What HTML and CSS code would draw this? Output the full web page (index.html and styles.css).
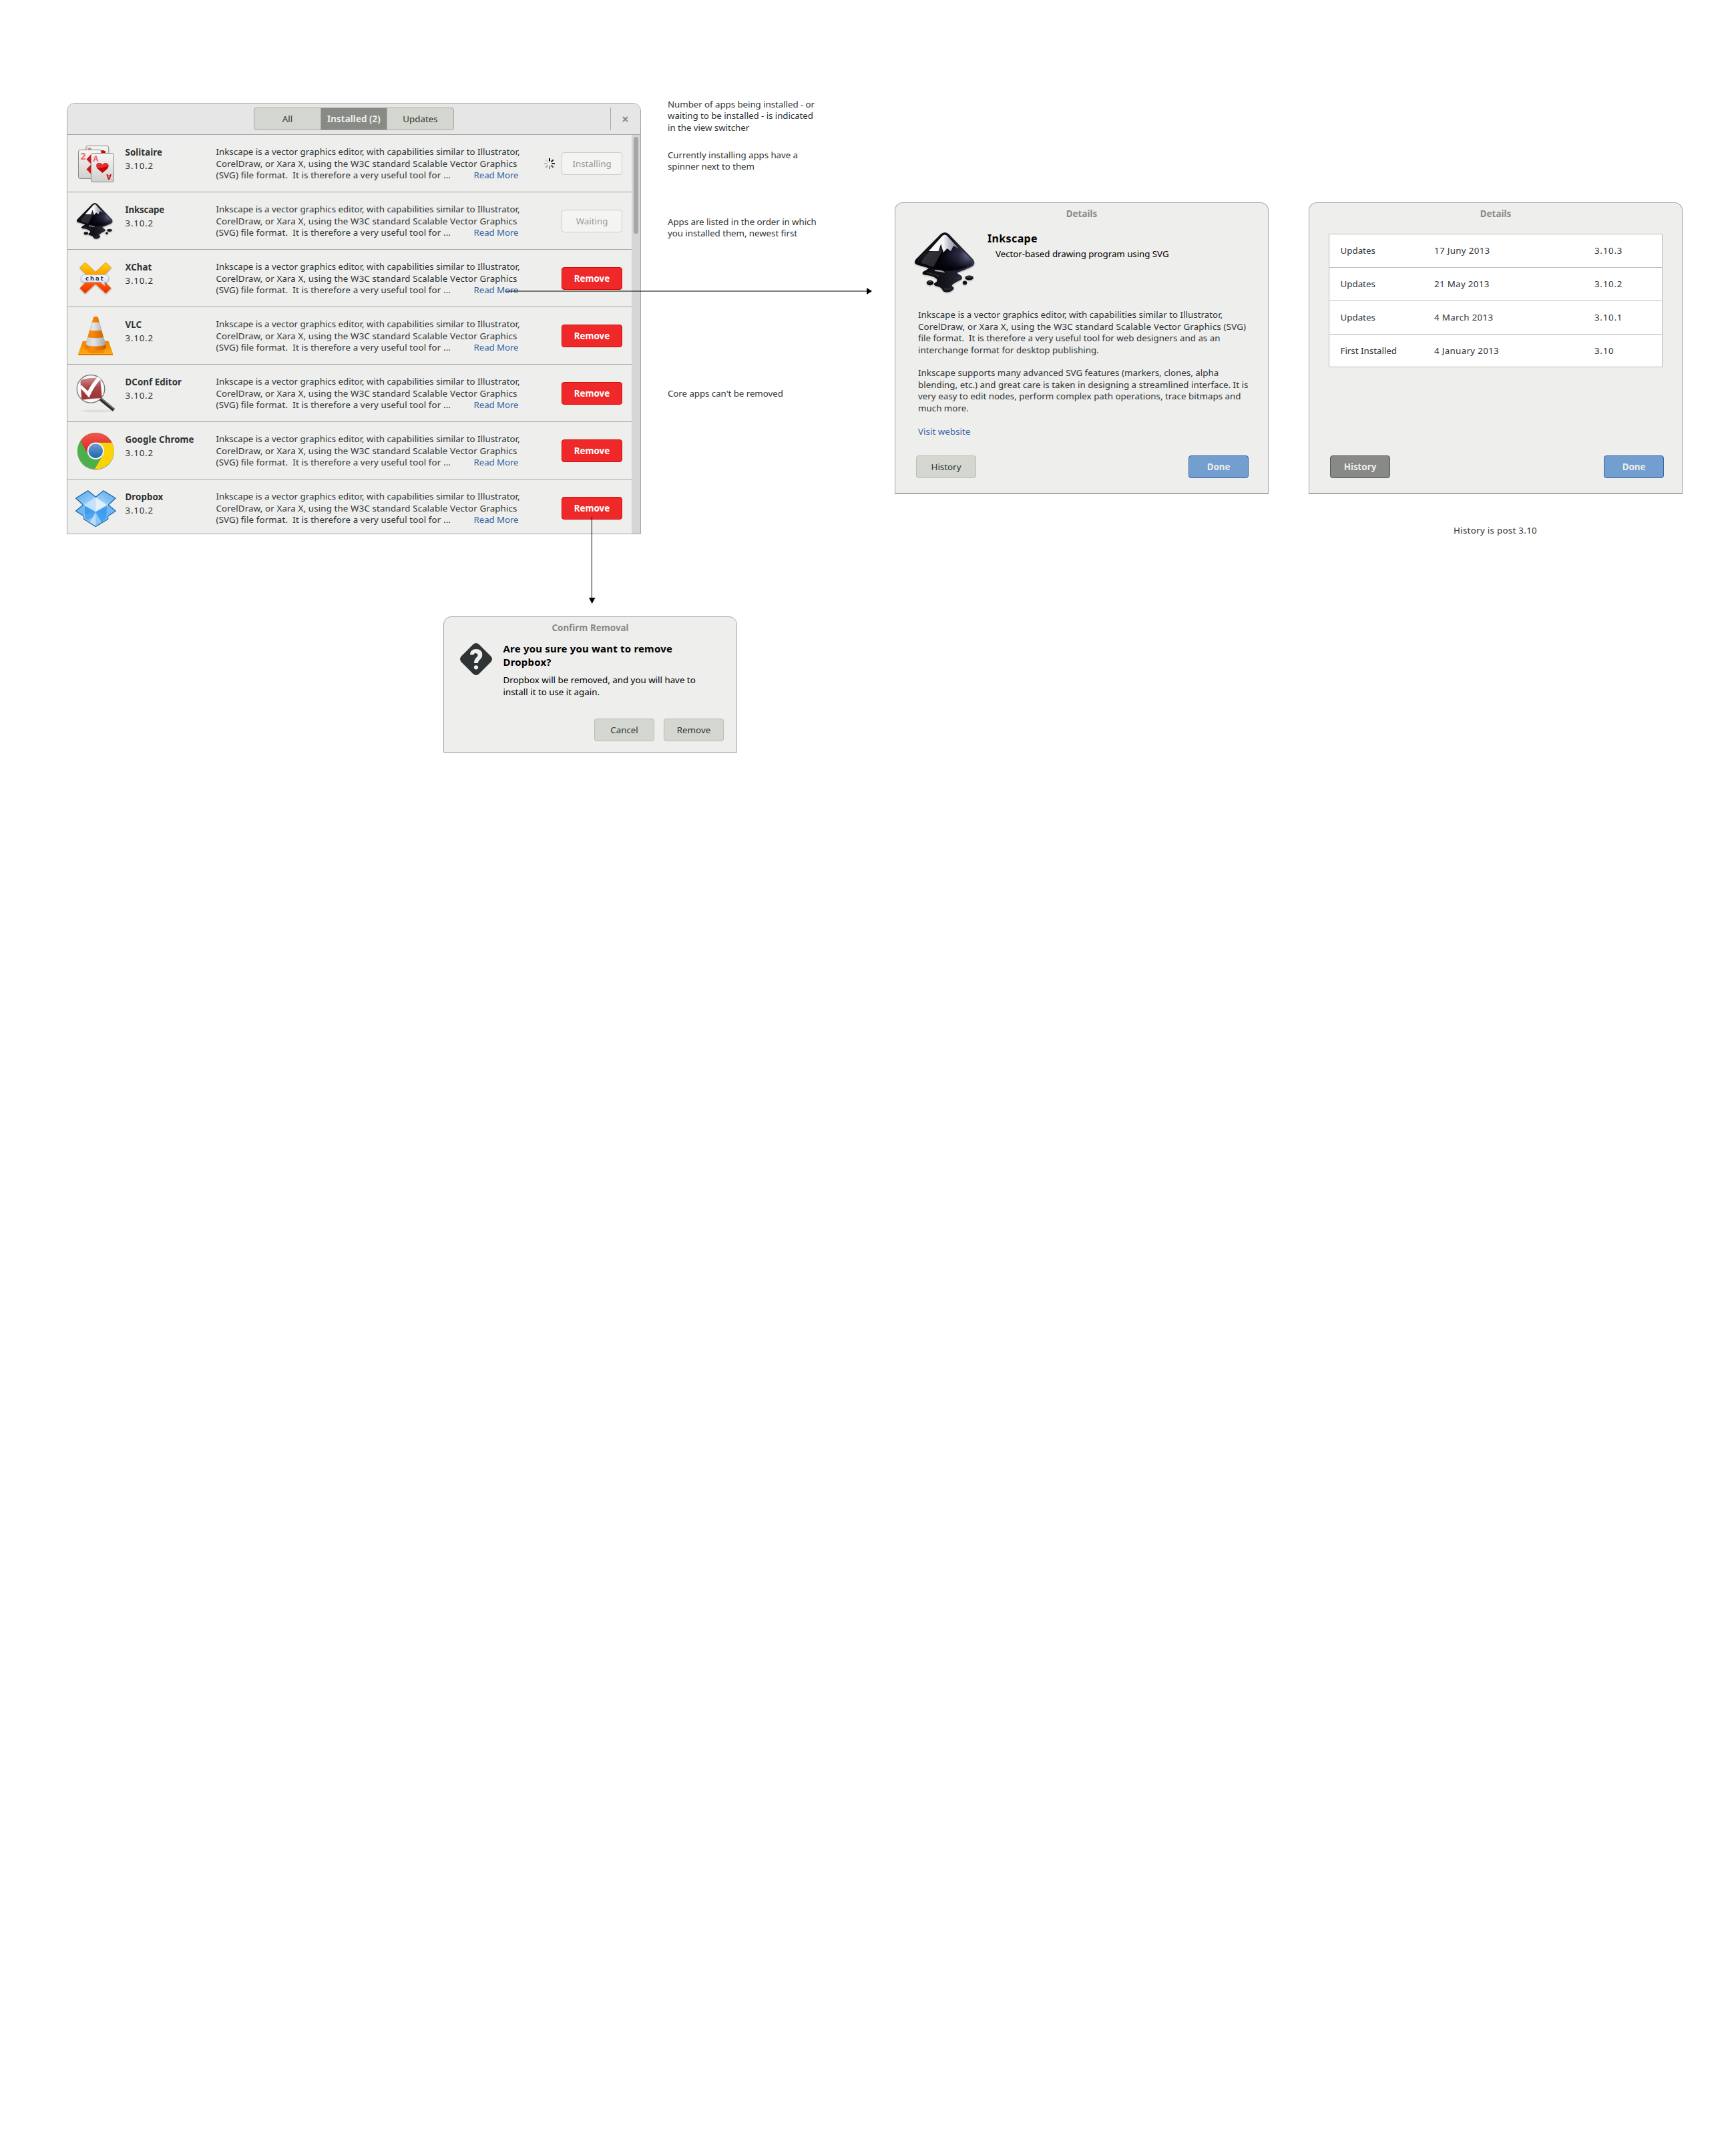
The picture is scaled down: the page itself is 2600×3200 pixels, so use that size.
FILE: index.html
```html
<!DOCTYPE html>
<html lang="en">
<head>
<meta charset="utf-8">
<title>Software: installed apps</title>
<link rel="stylesheet" href="styles.css">
</head>
<body>
<svg class="defs" width="0" height="0" aria-hidden="true">
  <defs>
    <linearGradient id="ink-body" x1="0" y1="0" x2="1" y2="0.3">
      <stop offset="0" stop-color="#3a3b42"/><stop offset=".3" stop-color="#15151a"/><stop offset=".55" stop-color="#020208"/><stop offset=".85" stop-color="#2c2e48"/><stop offset="1" stop-color="#6a6d90"/>
    </linearGradient>
    <linearGradient id="ink-edge" x1="0" y1="0" x2="1" y2="0">
      <stop offset="0" stop-color="#060609"/><stop offset=".5" stop-color="#14151b"/><stop offset="1" stop-color="#33364c"/>
    </linearGradient>
    <linearGradient id="ink-fade" x1="0" y1="0" x2="0" y2="1">
      <stop offset=".55" stop-color="#000006" stop-opacity="0"/><stop offset=".9" stop-color="#000006" stop-opacity=".9"/>
    </linearGradient>
    <linearGradient id="snow" x1="0" y1="0" x2="1" y2="0">
      <stop offset="0" stop-color="#fff"/><stop offset=".5" stop-color="#f4f4f6"/><stop offset=".65" stop-color="#c6c8d0"/><stop offset="1" stop-color="#7c7f96"/>
    </linearGradient>
    <symbol id="inkscape" viewBox="0 0 90 90" overflow="visible">
      <path d="M39 2.500Q45-2.500 51 2.500L87 40Q92.500 47 85 51.500L76 55.500Q70 58 64 60Q63 62 69 64.500Q73 68 69 71Q62 74 58 77Q54 79.500 56.500 81Q60 83 57.500 85.500Q54 90 47 89.500Q42 89 41 85Q39 81.500 31 80Q26 77 32 74.500Q36 71 30 67.500Q24 64 14 63.500Q9 61 14 58Q19 55.500 21 53.500L4 48.500Q-3 46 2 40Z" fill="url(#ink-edge)"/>
      <path d="M40.500 4Q45 0 49.500 4L85.500 41.500Q89 46.500 83 50L74 54Q64 58 50 58Q35 57 24 52L6 46.500Q1 45 5 40Z" fill="url(#ink-body)"/>
      <path d="M40.500 4Q45 0 49.500 4L85.500 41.500Q89 46.500 83 50L74 54Q64 58 50 58Q35 57 24 52L6 46.500Q1 45 5 40Z" fill="url(#ink-fade)"/>
      <path d="M35 27.500L40 21L41 28L28 52L10 46Q9 42 22 29Z" fill="#5a5b62" opacity=".45"/>
      <path d="M41.500 5Q45 2 48.500 5L65.500 24L58 20L54 28L48.500 24L43 30L39.200 17.500L35.500 28H21Z" fill="url(#snow)"/>
      <path d="M30 56Q42 55.500 45.500 60.500Q38 58.500 30 58Z" fill="#a5a5a8"/>
      <path d="M18 60Q28 62.500 36 65M44 84.500Q50 86 54 83M61 69Q66 69 68 67" fill="none" stroke="#3c3d42" stroke-width="1.200"/>
      <ellipse cx="23" cy="75.500" rx="5.200" ry="3.700" fill="#0b0b0e"/><ellipse cx="81.600" cy="68" rx="6.200" ry="3.400" fill="#121216"/><ellipse cx="75" cy="75.500" rx="3.200" ry="2.900" fill="#121216"/>
      <path d="M77.500 66.800H85.500M20 74.300L25 73.300" stroke="#6b6c72" stroke-width="1"/>
    </symbol>
    <linearGradient id="card" x1="0" y1="0" x2="0" y2="1"><stop offset="0" stop-color="#f6f6f5"/><stop offset="1" stop-color="#cfd0cc"/></linearGradient>
    <linearGradient id="xc" x1="0" y1="0" x2="0" y2="1"><stop offset="0" stop-color="#ffd400"/><stop offset=".35" stop-color="#ffa400"/><stop offset=".65" stop-color="#fb5a0c"/><stop offset="1" stop-color="#f52500"/></linearGradient>
    <linearGradient id="bubble" x1="0" y1="0" x2="0" y2="1"><stop offset="0" stop-color="#f4f7fc"/><stop offset="1" stop-color="#c9d8ee"/></linearGradient>
    <linearGradient id="cone" x1="0" y1="0" x2="1" y2="0"><stop offset="0" stop-color="#e87400"/><stop offset=".35" stop-color="#fb8a0c"/><stop offset="1" stop-color="#c95b00"/></linearGradient>
    <linearGradient id="stripe" x1="0" y1="0" x2="1" y2="0"><stop offset="0" stop-color="#c9cccd"/><stop offset=".4" stop-color="#e3e5e6"/><stop offset="1" stop-color="#a2a6a8"/></linearGradient>
    <linearGradient id="vbase" x1="0" y1="0" x2="0" y2="1"><stop offset="0" stop-color="#f08000"/><stop offset="1" stop-color="#ffae12"/></linearGradient>
    <linearGradient id="dc" x1="0" y1="0" x2="0" y2="1"><stop offset="0" stop-color="#cf8c8e"/><stop offset=".45" stop-color="#a84246"/><stop offset="1" stop-color="#9a3337"/></linearGradient>
    <linearGradient id="cr" x1="0" y1="0" x2="0" y2="1"><stop offset="0" stop-color="#ef5a4c"/><stop offset="1" stop-color="#d81a20"/></linearGradient>
    <linearGradient id="cb" x1="0" y1="0" x2="0" y2="1"><stop offset="0" stop-color="#6c9ed2"/><stop offset="1" stop-color="#1c65ac"/></linearGradient>
    <linearGradient id="dba" x1="0" y1="0" x2="1" y2="1"><stop offset="0" stop-color="#55a8ec"/><stop offset="1" stop-color="#a9d6fa"/></linearGradient>
    <linearGradient id="dbb" x1="1" y1="0" x2="0" y2="1"><stop offset="0" stop-color="#4ea3ea"/><stop offset="1" stop-color="#b5dcfb"/></linearGradient>
  </defs>
</svg>

<main class="canvas">

  <section class="window apps">
    <header class="bar">
      <nav class="switcher"><span class="tab first">All</span><span class="tab active">Installed (2)</span><span class="tab last">Updates</span></nav>
      <div class="close"><svg width="9" height="9" viewBox="0 0 9 9"><path d="M1 1L8 8M8 1L1 8" stroke="#888a85" stroke-width="2"/></svg></div>
    </header>
    <div class="body">
      <div class="list">
        <article class="row">
          <svg class="icon" viewBox="0 0 60 60">
            <rect x="16.800" y="4.500" width="34" height="44" rx="2.800" fill="url(#card)" stroke="#878984"/>
            <path d="M20 9V7.500M20.500 10L24.500 8" stroke="#ef6a6a" stroke-width="2"/><path d="M39 11.500Q42 10 46 12.500V16H40Z" fill="#cc0000"/>
            <rect x="5.500" y="10.500" width="34" height="43" rx="2.800" fill="url(#card)" stroke="#878984"/>
            <text x="8.500" y="24.500" class="card-two">2</text>
            <path d="M17.500 24.500L24 17.500V31.500ZM17.500 39.500L24 32.500V46.500Z" fill="#d81414"/>
            <rect x="24.500" y="15.500" width="33.800" height="43" rx="2.800" fill="url(#card)" stroke="#878984"/>
            <text x="27.300" y="28" class="card-ace">A</text>
            <path d="M41.500 45L34 38.500Q31 34 33.500 31.500Q38 28 41.500 32.500Q45 28 49.500 31.500Q52 34 49 38.500Z" fill="#cc0000"/>
            <path d="M32.500 35Q31.500 29.500 37 30Q40 30.500 41.500 32.500Q45 28.500 49.500 31.500Q50.500 33 50.400 34.500Q41 38 33 37Z" fill="#dc3434"/>
            <text x="0" y="0" transform="translate(55 46.500) rotate(180)" class="card-ace down">A</text>
          </svg>
          <div class="name"><b>Solitaire</b><span>3.10.2</span></div>
          <div class="desc"><p>Inkscape is a vector graphics editor, with capabilities similar to Illustrator,</p><p class="wide">CorelDraw, or Xara X, using the W3C standard Scalable Vector Graphics</p><p class="last-line"><span>(SVG) file format.&nbsp; It is therefore a very useful tool for ...</span><a>Read More</a></p></div>
          <div class="action">
            <svg class="spinner" width="18" height="18" viewBox="-9 -9 18 18" stroke-width="2"><path d="M0-3.500V-8" stroke="#000"/><path d="M2.500-2.500L5.700-5.700" stroke="#1c1c1c"/><path d="M3.500 0H8" stroke="#333"/><path d="M2.500 2.500L5.700 5.700" stroke="#4a4a4a"/><path d="M0 3.500V8" stroke="#8a8a8a"/><path d="M-2.500 2.500L-5.700 5.700" stroke="#a6a6a6"/><path d="M-3.500 0H-8" stroke="#bcbcbc"/><path d="M-2.500-2.500L-5.700-5.700" stroke="#d0d0d0"/></svg>
            <span class="btn off">Installing</span>
          </div>
        </article>
        <article class="row">
          <svg class="icon shade" viewBox="0 0 60 60"><use href="#inkscape" x="2.500" y="4" width="55" height="54"/></svg>
          <div class="name"><b class="ink">Inkscape</b><span>3.10.2</span></div>
          <div class="desc"><p>Inkscape is a vector graphics editor, with capabilities similar to Illustrator,</p><p class="wide">CorelDraw, or Xara X, using the W3C standard Scalable Vector Graphics</p><p class="last-line"><span>(SVG) file format.&nbsp; It is therefore a very useful tool for ...</span><a>Read More</a></p></div>
          <div class="action"><span class="btn off">Waiting</span></div>
        </article>
        <article class="row">
          <svg class="icon shade" viewBox="0 0 60 60">
            <path d="M15.500 7.200L31 21.500L46.500 7.200L54.300 15L39.500 30.300L54.300 45.500L46.500 53.500L31 39L15.500 53.500L7.700 45.500L22.500 30.300L7.700 15Z" fill="url(#xc)" stroke="#e08a1a" stroke-width=".8"/>
            <path d="M14 25.700H46Q50.700 26 50.700 31Q50.700 36 46 36.400L44.300 36.500L44.800 42L38.500 36.500H14Q9.200 36 9.200 31Q9.200 26 14 25.700Z" fill="url(#bubble)" stroke="#b4bfd2" stroke-width=".7"/>
            <text x="16" y="33.800" class="chat">chat</text>
          </svg>
          <div class="name"><b>XChat</b><span>3.10.2</span></div>
          <div class="desc"><p>Inkscape is a vector graphics editor, with capabilities similar to Illustrator,</p><p class="wide">CorelDraw, or Xara X, using the W3C standard Scalable Vector Graphics</p><p class="last-line"><span>(SVG) file format.&nbsp; It is therefore a very useful tool for ...</span><a>Read More</a></p></div>
          <div class="action"><span class="btn red">Remove</span></div>
        </article>
        <article class="row">
          <svg class="icon" viewBox="0 0 60 60">
            <path d="M12 38.700H50.500L57 57V59.800H5.300V57Z" fill="url(#vbase)"/><path d="M5.300 58.300H57V59.800H5.300Z" fill="#cf6a00"/>
            <path d="M18 52.500H45L42 57H22Z" fill="#e87a00" opacity=".6"/>
            <path d="M28 2.800Q31.300 1 34.700 2.800L47.300 48Q47 52.800 31.300 52.800Q15 52.800 14.700 48Z" fill="url(#cone)"/>
            <path d="M25.800 10.700H36.900L40.300 22.500Q31 24 22.300 22.500ZM19.300 33Q31 35.500 43.300 33L46 43Q45 46.500 31 46.500Q17.500 46.500 16.500 43Z" fill="url(#stripe)"/>
          </svg>
          <div class="name"><b>VLC</b><span>3.10.2</span></div>
          <div class="desc"><p>Inkscape is a vector graphics editor, with capabilities similar to Illustrator,</p><p class="wide">CorelDraw, or Xara X, using the W3C standard Scalable Vector Graphics</p><p class="last-line"><span>(SVG) file format.&nbsp; It is therefore a very useful tool for ...</span><a>Read More</a></p></div>
          <div class="action"><span class="btn red">Remove</span></div>
        </article>
        <article class="row">
          <svg class="icon" viewBox="0 0 60 60">
            <ellipse cx="33" cy="57.500" rx="23" ry="2" fill="#dededc"/>
            <circle cx="24" cy="24.300" r="20.800" fill="#f6f7f6" stroke="#76787a" stroke-width="1.300"/>
            <path d="M8.500 13Q9 10.500 12 10Q25 7 37 8Q38 8 38.200 10L40.500 35Q40.500 38 37.500 38.300Q25 38.500 13 40.500Q10.500 40.500 10 38Z" fill="url(#dc)"/>
            <path d="M4.500 19.500L10.500 19.300L19.500 27.500Q25 17 34.500 6L39 9.500Q29 20 21.300 37.500Q14 28 4.500 19.500Z" fill="#fff"/>
            <path d="M38.500 39.500L58.500 56" stroke="#2b2c2d" stroke-width="5"/><path d="M39.500 38.500L59 54.500" stroke="#85878a" stroke-width="1.200"/>
          </svg>
          <div class="name"><b>DConf Editor</b><span>3.10.2</span></div>
          <div class="desc"><p>Inkscape is a vector graphics editor, with capabilities similar to Illustrator,</p><p class="wide">CorelDraw, or Xara X, using the W3C standard Scalable Vector Graphics</p><p class="last-line"><span>(SVG) file format.&nbsp; It is therefore a very useful tool for ...</span><a>Read More</a></p></div>
          <div class="action"><span class="btn red">Remove</span></div>
        </article>
        <article class="row">
          <svg class="icon soft" viewBox="0 0 60 60">
            <circle cx="31.300" cy="31.300" r="27.400" fill="#4bb04a"/>
            <path d="M31.300 18.700H55.700A27.400 27.400 0 0 1 29.700 58.700L42.200 37.600Z" fill="#fcd209"/>
            <path d="M8.500 16.200A27.400 27.400 0 0 1 55.700 18.700H31.300L20.400 37.600Z" fill="url(#cr)"/>
            <circle cx="31.300" cy="31.300" r="12.700" fill="#f4f6f8"/><circle cx="31.300" cy="31.300" r="10.700" fill="url(#cb)"/>
          </svg>
          <div class="name"><b>Google Chrome</b><span>3.10.2</span></div>
          <div class="desc"><p>Inkscape is a vector graphics editor, with capabilities similar to Illustrator,</p><p class="wide">CorelDraw, or Xara X, using the W3C standard Scalable Vector Graphics</p><p class="last-line"><span>(SVG) file format.&nbsp; It is therefore a very useful tool for ...</span><a>Read More</a></p></div>
          <div class="action"><span class="btn red">Remove</span></div>
        </article>
        <article class="row">
          <svg class="icon" viewBox="0 0 60 60">
            <path d="M31.300 14L13 26L13.700 47.300L31.300 58.500L49.700 47.300V26Z" fill="#a9d5fa"/>
            <path d="M19.700 4.700L31.300 14.200L13 26L1.500 16Z" fill="url(#dba)"/><path d="M43 4.700L31.300 14.200L50 26L61.200 16Z" fill="url(#dbb)"/>
            <path d="M12.500 26L1.500 35.300L13.700 43L31.300 36ZM50.300 26L61.200 35.300L49.700 43L31.300 36Z" fill="#6db8f3"/>
            <path d="M13.700 41V47.300L31.300 58.500V36Z" fill="#b4dbfb"/><path d="M49.700 41V47.300L31.300 58.500V36Z" fill="#8ac6f8"/>
            <path d="M15 28L31.300 37L23 52L15 46Z" fill="#2c93ec" opacity=".75"/><path d="M47.600 28L31.300 37L40 52L47.600 46Z" fill="#2c93ec" opacity=".75"/>
            <path d="M31.300 36V41L18 50L25 54.500L31.300 58.500Z" fill="#c4e2fb" opacity=".5"/>
            <path d="M31.300 15L15 26L31.300 36Z" fill="#c4e2fb"/><path d="M31.300 15L47.600 26L31.300 36Z" fill="#e2f1fd"/>
            <path d="M19.700 4.700L31.300 14.200L43 4.700L61.200 16L50.300 26L61.200 35.300L49.700 43V47.300L31.300 58.500L13.700 47.300V43L1.500 35.300L12.500 26L1.500 16Z" fill="none" stroke="#1766a6" stroke-width="1.200"/>
          </svg>
          <div class="name"><b>Dropbox</b><span>3.10.2</span></div>
          <div class="desc"><p>Inkscape is a vector graphics editor, with capabilities similar to Illustrator,</p><p class="wide">CorelDraw, or Xara X, using the W3C standard Scalable Vector Graphics</p><p class="last-line"><span>(SVG) file format.&nbsp; It is therefore a very useful tool for ...</span><a>Read More</a></p></div>
          <div class="action"><span class="btn red">Remove</span></div>
        </article>
      </div>
      <div class="scroll"><div class="thumb"></div></div>
    </div>
  </section>

  <aside class="note n1"><p>Number of apps being installed - or</p><p>waiting to be installed - is indicated</p><p>in the view switcher</p></aside>
  <aside class="note n2"><p>Currently installing apps have a</p><p>spinner next to them</p></aside>
  <aside class="note n3"><p>Apps are listed in the order in which</p><p>you installed them, newest first</p></aside>
  <aside class="note n4"><p>Core apps can't be removed</p></aside>
  <aside class="note n5"><p>History is post 3.10</p></aside>

  <section class="window panel details">
    <h2>Details</h2>
    <div class="head">
      <svg class="shade" width="90" height="90" viewBox="0 0 90 90"><use href="#inkscape" width="90" height="90"/></svg>
      <div><h1>Inkscape</h1><p class="sub">Vector-based drawing program using SVG</p></div>
    </div>
    <div class="text">
      <p>Inkscape is a vector graphics editor, with capabilities similar to Illustrator,</p><p class="wide">CorelDraw, or Xara X, using the W3C standard Scalable Vector Graphics (SVG)</p><p>file format.&nbsp; It is therefore a very useful tool for web designers and as an</p><p>interchange format for desktop publishing.</p>
    </div>
    <div class="text">
      <p>Inkscape supports many advanced SVG features (markers, clones, alpha</p><p>blending, etc.) and great care is taken in designing a streamlined interface. It is</p><p>very easy to edit nodes, perform complex path operations, trace bitmaps and</p><p>much more.</p>
    </div>
    <div class="text"><a class="site">Visit website</a></div>
    <footer><span class="btn plain">History</span><span class="btn blue">Done</span></footer>
  </section>

  <section class="window panel history">
    <h2>Details</h2>
    <div class="table">
      <div class="tr"><span>Updates</span><span class="num">17 Juny 2013</span><span class="ver">3.10.3</span></div>
      <div class="tr"><span>Updates</span><span class="num">21 May 2013</span><span class="ver">3.10.2</span></div>
      <div class="tr"><span>Updates</span><span class="num">4 March 2013</span><span class="ver">3.10.1</span></div>
      <div class="tr"><span>First Installed</span><span class="num">4 January 2013</span><span class="ver">3.10</span></div>
    </div>
    <footer><span class="btn dark">History</span><span class="btn blue">Done</span></footer>
  </section>

  <section class="window confirm">
    <h2>Confirm Removal</h2>
    <div class="ask">
      <svg width="48" height="48" viewBox="0 0 48 48"><path d="M19.500 2Q24 -2 28.500 2L46 19.500Q50 24 46 28.500L28.500 46Q24 50 19.500 46L2 28.500Q-2 24 2 19.500Z" fill="#2e3436"/><path d="M15 17.500Q15 9 24 9Q33.300 9 33.300 17.500Q33.300 22 29 25.500Q27 27.500 27 30H21Q21 25 24 22Q27 19.500 26.500 17.500Q26 15 23.500 15Q20.500 15 20.500 17.500Z" fill="#eeeeec"/><circle cx="24" cy="36.300" r="3.100" fill="#eeeeec"/></svg>
      <div><h1>Are you sure you want to remove<br>Dropbox?</h1><p>Dropbox will be removed, and you will have to</p><p>install it to use it again.</p></div>
    </div>
    <footer><span class="btn plain">Cancel</span><span class="btn plain">Remove</span></footer>
  </section>

  <svg class="arrow across" width="550" height="12" viewBox="0 0 550 12"><path d="M0 5H542V7H0Z" fill="#000" opacity=".5"/><path d="M541 1L549 6L541 11Z"/></svg>
  <svg class="arrow down-to" width="12" height="132" viewBox="0 0 12 132"><path d="M5 0H6V122H5Z"/><path d="M1 121H10.500L5.700 130Z"/></svg>
</main>
</body>
</html>
```
FILE: styles.css
```css
* { box-sizing: border-box; }
body { margin: 0; background: #fff; color: #2e3436; font: 13.33px/17.5px "Noto Sans", sans-serif; }
p, h1, h2 { margin: 0; white-space: nowrap; }
a { color: #3465a4; letter-spacing: -0.1px; }
.defs { position: absolute; }

/* free canvas holding the windows, notes and arrows */
.canvas { position: relative; width: 2600px; height: 3200px; overflow: hidden; }
.window { position: absolute; border: 1px solid #a6a6a6; border-radius: 12px 12px 0 0; background: #eeeeec; display: flex; flex-direction: column; overflow: hidden; }
.window h2 { font-size: 13.33px; line-height: 20px; padding-top: 6px; text-align: center; color: #888a85; letter-spacing: .05px; }
.apps { left: 100px; top: 154px; width: 860px; height: 646px; }
.details { left: 1340px; top: 303px; }
.history { left: 1960px; top: 303px; }
.confirm { left: 664px; top: 923px; width: 440px; height: 204px; }

.bar { flex: none; height: 47px; display: grid; grid-template-columns: 1fr 300px 1fr; align-items: center; background: #e6e6e6; border-bottom: 1px solid #a6a6a6; }
.switcher { grid-column: 2; height: 34px; display: grid; grid-template-columns: 99px 1fr 99px; border: 1px solid #a6a6a6; border-radius: 4px; overflow: hidden; background: #d3d7cf; line-height: 32px; text-align: center; }
.tab.active { background: #888a85; color: #eeeeec; font-weight: 700; border: solid #a6a6a6; border-width: 0 1px; letter-spacing: .08px; }
.close { justify-self: end; width: 45px; height: 34px; border-left: 1px solid #a6a6a6; display: flex; align-items: center; padding-left: 17px; }

.body { flex: 1; min-height: 0; display: flex; }
.list { width: 845px; height: 597px; overflow: hidden; }
.row { height: 86px; border-bottom: 1px solid #a6a6a6; display: grid; grid-template-columns: 86.5px 136px 453px 1fr; }
.row:last-child { border-bottom: 0; }
.icon { width: 60px; height: 60px; margin: 12px 0 0 11px; overflow: visible; }
.shade { overflow: visible; filter: drop-shadow(0 1px 1px rgba(0, 0, 0, .3)); }
.soft { filter: drop-shadow(0 1px .5px rgba(0, 0, 0, .3)); }
.name { padding-top: 15.5px; line-height: 20px; display: flex; flex-direction: column; white-space: nowrap; }
.name b { letter-spacing: .06px; }
.name b.ink { letter-spacing: -.2px; }
.name span { letter-spacing: .78px; }
.desc { padding-top: 17px; }
.wide { letter-spacing: .13px; }
.last-line { display: flex; justify-content: space-between; letter-spacing: .13px; }
.action { height: 34px; margin-top: 26px; padding-right: 14px; display: flex; justify-content: flex-end; align-items: center; gap: 9px; }

.btn { width: 90px; height: 34px; line-height: 32px; text-align: center; border: 1px solid; border-radius: 4px; }
.off { width: 91px; background: #f4f4f2; border-color: #cbccca; color: #989a97; }
.red { width: 91px; background: #ef2929; border-color: #d40a0a; color: #fff; font-weight: 700; }
.plain { background: #d3d7cf; border-color: #babdb6; }
.dark { background: #888a85; border-color: #555753; color: #eeeeec; font-weight: 700; }
.blue { background: #729fcf; border-color: #3465a4; color: #eeeeec; font-weight: 700; }

.scroll { width: 13px; background: #d6d6d6; padding: 3px 3px 0; }
.thumb { width: 7px; height: 145px; border-radius: 4px; background: #a6a6a6; }

.note { position: absolute; left: 1000px; letter-spacing: -.06px; }
.n1 { top: 147.500px; }
.n2 { top: 223.500px; }
.n3 { top: 323.500px; }
.n4 { top: 581px; }
.n5 { left: 2177px; top: 786px; letter-spacing: .3px; }

.panel { width: 560px; height: 437px; border-bottom-width: 2px; }
.panel footer { margin-top: auto; padding: 0 29px 22px 31px; display: flex; justify-content: space-between; }
.history footer { padding-right: 27px; }
.head { margin: 18px 0 25px 29px; display: flex; gap: 19px; color: #000; }
.head h1 { margin-top: -2px; font-size: 16px; line-height: 22px; letter-spacing: .36px; }
.sub { margin-top: 3px; padding-left: 12px; line-height: 18px; letter-spacing: -.05px; }
.text { padding-left: 34px; margin-bottom: 17.4px; line-height: 17.5px; letter-spacing: .015px; }
.text .wide { letter-spacing: .17px; }
.site { letter-spacing: .05px; }

.table { margin: 20px 29px 0; border: 1px solid #babdb6; background: #fff; }
.tr { height: 50px; padding: 1px 0 0 16.500px; border-bottom: 1px solid #babdb6; display: grid; grid-template-columns: 140.500px 240px 1fr; align-items: center; }
.tr:last-child { border-bottom: 0; height: 48px; padding-top: 2px; }
.num { letter-spacing: .33px; }
.ver { letter-spacing: .75px; }

.ask { padding: 13px 0 0 24px; display: flex; gap: 16.500px; color: #000; }
.ask h1 { font-size: 15px; line-height: 20px; letter-spacing: .19px; margin: -2px 0 9px; }
.confirm footer { margin-top: auto; padding: 0 19px 16px 0; display: flex; justify-content: flex-end; gap: 14px; }

.card-two { font: 700 14px "Noto Sans", sans-serif; fill: #ee6b6b; }
.card-ace { font: 700 12px "Noto Sans", sans-serif; fill: #ee6b6b; }
.card-ace.down { font-size: 11px; fill: #cc0000; }
.chat { font: 700 8.500px "DejaVu Sans", sans-serif; letter-spacing: 2px; fill: #2b3550; }

.arrow { position: absolute; }
.across { left: 757px; top: 430px; }
.down-to { left: 881px; top: 774px; }
```
